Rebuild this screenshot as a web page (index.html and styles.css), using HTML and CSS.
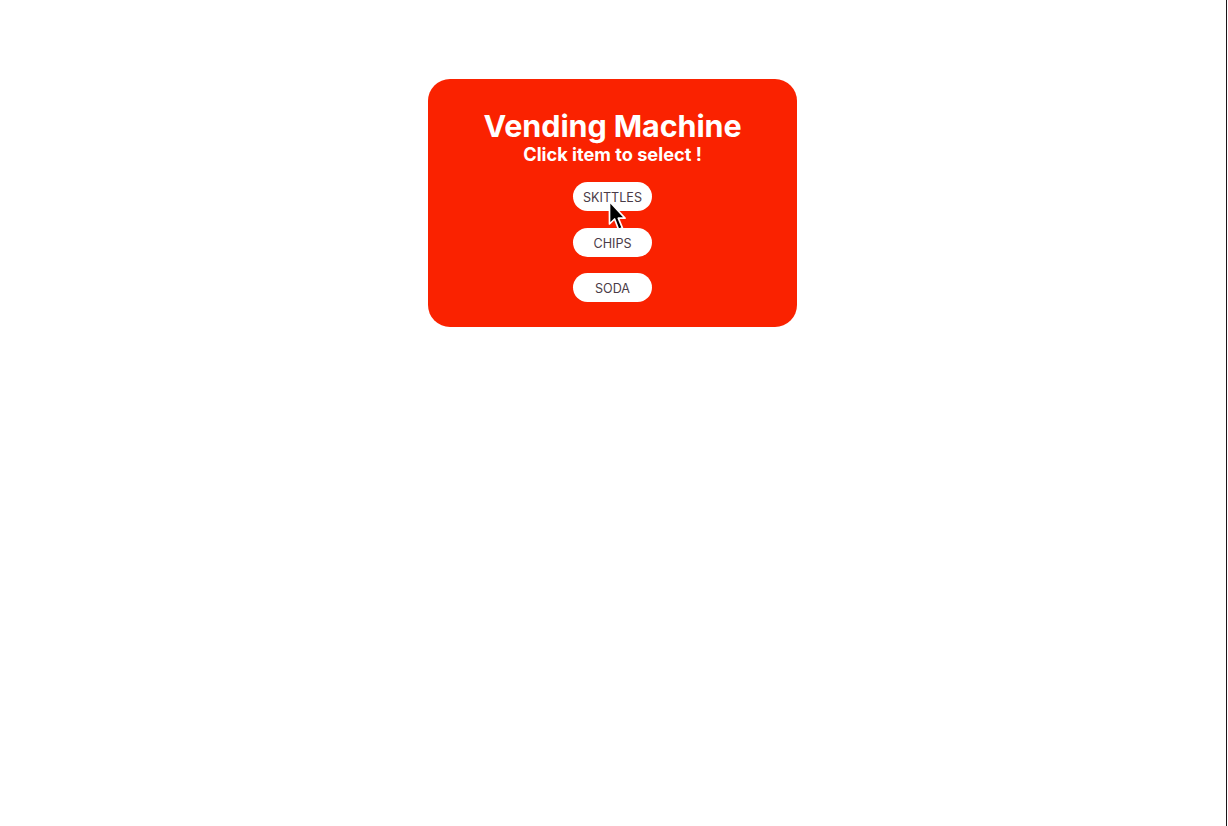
FILE: index.html
```html
<!DOCTYPE html>
<html lang="en">
<head>
<meta charset="utf-8">
<title>Vending Machine</title>
<link rel="stylesheet" href="styles.css">
</head>
<body>
<div class="page">
  <div class="machine">
    <h1 class="title">Vending Machine</h1>
    <h2 class="subtitle">Click item to select !</h2>
    <div class="items">
      <button class="item">SKITTLES
        <svg class="cursor" width="20" height="32" viewBox="0 0 20 32" aria-hidden="true">
          <path d="M1.5 1.5 L1.5 24 L6.6 19 L10.6 29.5 L14.4 27.8 L10.3 18.2 L17 18.2 Z" fill="#000" stroke="#fff" stroke-width="1.7" stroke-linejoin="round"/>
        </svg>
      </button>
      <button class="item">CHIPS</button>
      <button class="item">SODA</button>
    </div>
  </div>
</div>
</body>
</html>
```
FILE: styles.css
```css
html, body {
  margin: 0;
  padding: 0;
  background: #fff;
}

.page {
  width: 1225px;
  padding-right: 1px;
  min-height: 826px;
  border-right: 1px solid #1c1418;
  display: flex;
  justify-content: center;
  align-items: flex-start;
  font-family: Inter, "Noto Sans", sans-serif;
}

.machine {
  margin-top: 79px;
  width: 369px;
  height: 248px;
  box-sizing: border-box;
  background: #fa2200;
  border-radius: 22px;
  padding-top: 29px;
  display: flex;
  flex-direction: column;
  align-items: center;
  color: #fff;
}

.title {
  margin: 0;
  font-size: 30.5px;
  font-weight: 700;
  line-height: 35px;
  letter-spacing: -0.1px;
}

.subtitle {
  margin: 0;
  font-size: 18.2px;
  font-weight: 700;
  line-height: 22px;
}

.items {
  margin-top: 17px;
  display: flex;
  flex-direction: column;
  align-items: center;
  gap: 16.5px;
}

.item {
  position: relative;
  width: 79px;
  height: 29px;
  border: none;
  border-radius: 15px;
  background: #fff;
  color: #4a3b47;
  font-family: Inter, "Noto Sans", sans-serif;
  font-size: 12.6px;
  padding: 2px 0 0;
  line-height: 27px;
}

.cursor {
  position: absolute;
  left: 35px;
  top: 17.5px;
}
```
